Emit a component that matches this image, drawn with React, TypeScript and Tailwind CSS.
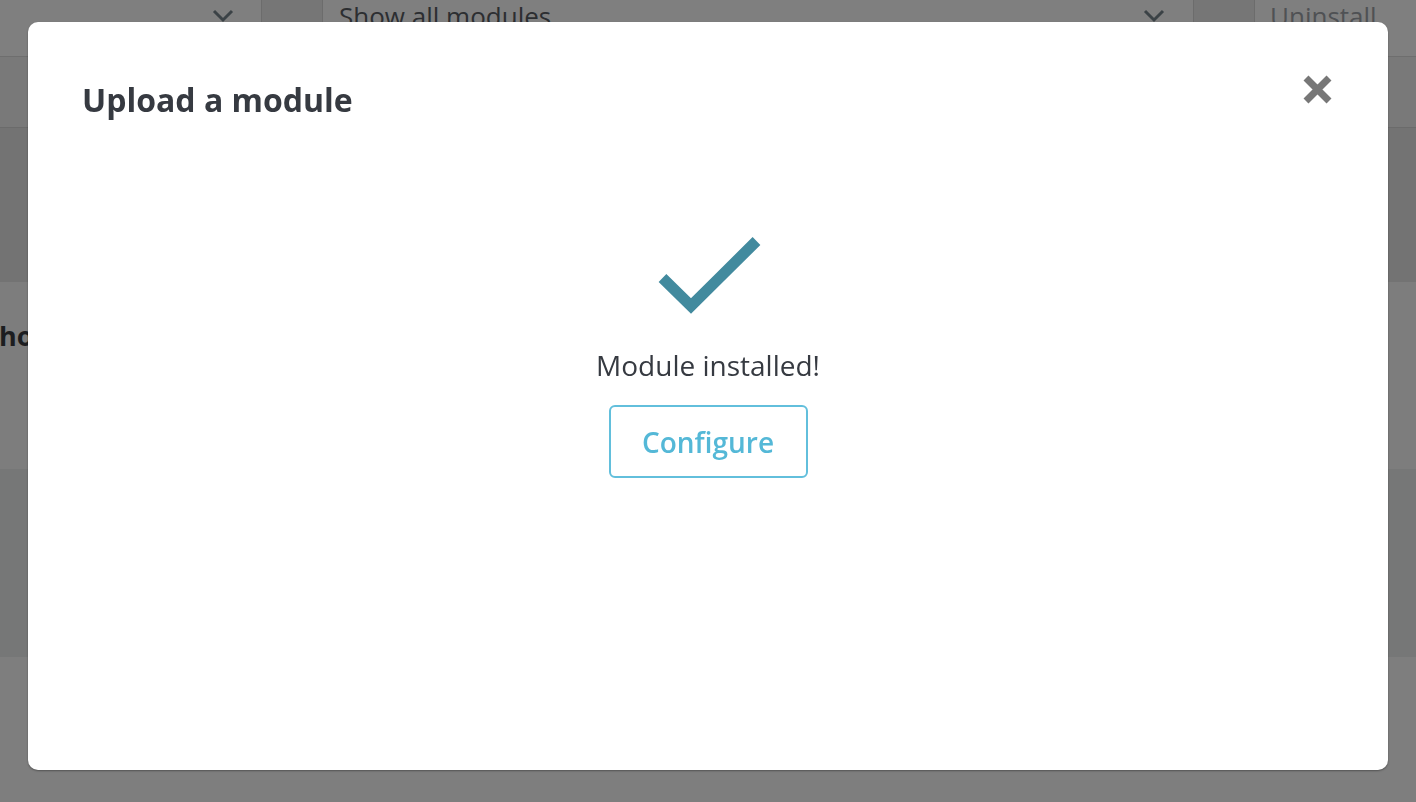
import React from 'react';

const font = { fontFamily: '"Open Sans", "Noto Sans", sans-serif' };

// chevron used in the dimmed select boxes behind the modal
const Chevron = () => (
  <svg width="22" height="14" viewBox="0 0 22 14" className="mt-[9px]">
    <path d="M2 2 L11 11 L20 2" fill="none" stroke="#3b4246" strokeWidth="3" />
  </svg>
);

function BackgroundPage() {
  return (
    <div className="flex h-screen w-full flex-col overflow-hidden bg-[#7e7e7e]" style={font}>
      {/* top toolbar */}
      <div className="flex h-[57px] shrink-0 border-b border-[#6e6e6e] bg-[#7f7f7f]">
        <div className="w-[212px] shrink-0" />
        <Chevron />
        <div className="w-[27px] shrink-0" />
        <div className="h-full w-[62px] shrink-0 border-x border-[#6c6c6c] bg-[#767676]" />
        <div className="flex-1 pl-[16px] pt-[1px] text-[26px] leading-[1.2] text-[#2c2e31]">Show all modules</div>
        <Chevron />
        <div className="w-[28px] shrink-0" />
        <div className="h-full w-[62px] shrink-0 border-x border-[#6c6c6c] bg-[#767676]" />
        <div className="w-[161px] shrink-0 pl-[15px] pt-[1px] text-[26px] leading-[1.2] text-[#4f5154]">Uninstall</div>
      </div>
      <div className="h-[71px] shrink-0 border-b border-[#6b6b6b] bg-[#797979]" />
      <div className="h-[154px] shrink-0 bg-[#737373]" />
      <div className="h-[187px] shrink-0 bg-[#7d7d7d] pt-[38px]">
        <div className="-ml-[1px] text-[27px] font-bold leading-[1.2] text-[#1c1d20]">ho</div>
      </div>
      <div className="h-[188px] shrink-0 bg-[#767777]" />
      <div className="flex-1 bg-[#7e7e7e]" />
    </div>
  );
}

function UploadModal() {
  return (
    <div
      className="fixed left-[28px] top-[22px] flex h-[748px] w-[1360px] flex-col rounded-[10px] bg-white shadow-[0_1px_2px_rgba(0,0,0,0.35)]"
      style={font}
    >
      <div className="relative pl-[54px] pt-[59px]">
        <h2 className="text-[32px] font-bold leading-[1.2] text-[#363a41]">Upload a module</h2>
        <button className="absolute right-[55px] top-[53px]" aria-label="Close">
          <svg width="31" height="29" viewBox="0 0 31 29">
            <path d="M4 3 L27 26 M27 3 L4 26" stroke="#777777" strokeWidth="7" fill="none" />
          </svg>
        </button>
      </div>

      <div className="flex flex-col items-center pt-[115px]">
        <svg width="114" height="84" viewBox="0 0 114 84" className="ml-[2px]">
          <path d="M10.5 44 L39 72 L104.5 7" fill="none" stroke="#428a9e" strokeWidth="11" strokeLinejoin="miter" />
        </svg>
        <p className="mt-[31px] text-[28px] leading-[1.2] text-[#363a41]">Module installed!</p>
        <button className="mt-[22px] flex h-[73px] w-[199px] items-center justify-center rounded-[6px] border-2 border-[#62bfdc] pt-[1px] text-[28px] font-semibold text-[#54b8d7]">
          Configure
        </button>
      </div>
    </div>
  );
}

export default function App() {
  return (
    <div className="relative h-screen w-full overflow-hidden">
      <BackgroundPage />
      <UploadModal />
    </div>
  );
}
